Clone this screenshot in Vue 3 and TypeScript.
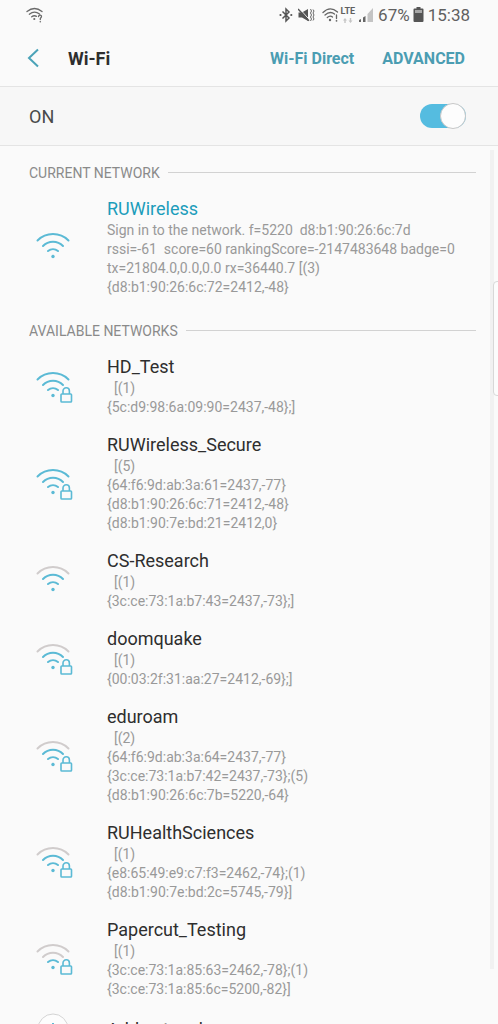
<script setup lang="ts">
import { ref } from 'vue'

interface Network {
  name: string
  bars: number
  locked: boolean
  details: string[]
  current?: boolean
}

interface Section {
  title: string
  networks: Network[]
}

const enabled = ref(true)

const sections: Section[] = [
  {
    title: 'CURRENT NETWORK',
    networks: [
      {
        name: 'RUWireless',
        bars: 3,
        locked: false,
        current: true,
        details: [
          'Sign in to the network. f=5220  d8:b1:90:26:6c:7d',
          'rssi=-61  score=60 rankingScore=-2147483648 badge=0',
          'tx=21804.0,0.0,0.0 rx=36440.7 [(3)',
          '{d8:b1:90:26:6c:72=2412,-48}',
        ],
      },
    ],
  },
  {
    title: 'AVAILABLE NETWORKS',
    networks: [
      { name: 'HD_Test', bars: 3, locked: true, details: ['  [(1)', '{5c:d9:98:6a:09:90=2437,-48};]'] },
      {
        name: 'RUWireless_Secure',
        bars: 3,
        locked: true,
        details: [
          '  [(5)',
          '{64:f6:9d:ab:3a:61=2437,-77}',
          '{d8:b1:90:26:6c:71=2412,-48}',
          '{d8:b1:90:7e:bd:21=2412,0}',
        ],
      },
      { name: 'CS-Research', bars: 2, locked: false, details: ['  [(1)', '{3c:ce:73:1a:b7:43=2437,-73};]'] },
      { name: 'doomquake', bars: 2, locked: true, details: ['  [(1)', '{00:03:2f:31:aa:27=2412,-69};]'] },
      {
        name: 'eduroam',
        bars: 2,
        locked: true,
        details: [
          '  [(2)',
          '{64:f6:9d:ab:3a:64=2437,-77}',
          '{3c:ce:73:1a:b7:42=2437,-73};(5)',
          '{d8:b1:90:26:6c:7b=5220,-64}',
        ],
      },
      {
        name: 'RUHealthSciences',
        bars: 2,
        locked: true,
        details: ['  [(1)', '{e8:65:49:e9:c7:f3=2462,-74};(1)', '{d8:b1:90:7e:bd:2c=5745,-79}]'],
      },
      {
        name: 'Papercut_Testing',
        bars: 1,
        locked: true,
        details: ['  [(1)', '{3c:ce:73:1a:85:63=2462,-78};(1)', '{3c:ce:73:1a:85:6c=5200,-82}]'],
      },
    ],
  },
]
</script>

<template>
  <div class="screen">
    <div class="status">
      <svg class="status-wifi" width="18" height="18" viewBox="0 0 18 18" aria-hidden="true">
        <g fill="none" stroke="#6a6a6a" stroke-width="1.3" stroke-linecap="round">
          <path d="M1 5.500Q8.500-.5 16 5.500" />
          <path d="M3.300 8.200Q8.500 4 13.500 8" />
          <path d="M5.700 10.800Q8 9 10.500 10.300" />
          <path d="M12.500 10.500Q12.800 9 14.300 9.200Q16 9.600 15.300 11.200L14.300 12.500V13.500" />
        </g>
        <circle cx="8.300" cy="13" r="1.100" fill="#6a6a6a" />
        <circle cx="14.300" cy="15.800" r=".8" fill="#6a6a6a" />
      </svg>
      <div class="status-right">
        <svg width="14" height="18" viewBox="0 0 14 18" aria-hidden="true">
          <path d="M3.500 5.500L10 12L7 15V3L10 6L3.500 12.500" fill="none" stroke="#555" stroke-width="1.500" />
          <circle cx="1.500" cy="9" r="1.100" fill="#555" />
          <circle cx="12.300" cy="9" r="1.100" fill="#555" />
        </svg>
        <svg class="mute" width="17" height="18" viewBox="0 0 17 18" aria-hidden="true">
          <path d="M.5 6.500H4L10 3V15L4 11.500H.5Z" fill="#555" />
          <path d="M.8 2L11.300 13.500" stroke="#fafafa" stroke-width="1" />
          <path d="M0 3L11 14.800" stroke="#555" stroke-width="1.400" />
          <path d="M12.500 3l1 2L12.500 7l1 2L12.500 11l1 2L12.500 15M15 3.500l1 1.500L15 7l1 2L15 11l1 2L15 14.500" fill="none" stroke="#666" stroke-width="1" />
        </svg>
        <svg class="wifi-small" width="17" height="18" viewBox="0 0 17 18" aria-hidden="true">
          <g fill="none" stroke="#666" stroke-width="1.300" stroke-linecap="round">
            <path d="M1 6.500Q8-.5 15.500 6" />
            <path d="M3 9Q8 4.500 12.500 8" />
            <path d="M5.300 11.500Q8 9 10.500 11" />
            <path d="M14.500 9V12.500" />
          </g>
          <circle cx="8" cy="14" r="1.200" fill="#666" />
          <circle cx="14.500" cy="14.800" r=".9" fill="#666" />
        </svg>
        <div class="lte">
          <span>LTE</span>
          <svg width="10" height="5" viewBox="0 0 10 5" aria-hidden="true">
            <path d="M0 2.500L2 0L4 2.500H2.700V5H1.300V2.500ZM5.500 2.500H6.800V0H8.200V2.500H9.500L7.500 5Z" fill="#c4c4c4" />
          </svg>
        </div>
        <svg class="signal" width="14" height="16" viewBox="0 0 14 16" aria-hidden="true">
          <path d="M0 13L2 12V15H0ZM4 10.500L6.500 9V15H4Z" fill="#666" />
          <path d="M8.500 7L14 1V15H8.500Z" fill="#c4c4c4" />
        </svg>
        <span class="percent">67%</span>
        <svg class="battery" width="11" height="16" viewBox="0 0 11 16" aria-hidden="true">
          <path d="M3.500 0H7.500V1.500H9.500Q10.500 1.500 10.500 2.500V14Q10.500 15 9.500 15H1.500Q.5 15 .5 14V2.500Q.5 1.500 1.500 1.500H3.500Z" fill="#555" />
          <path d="M2 3H9V6H2Z" fill="#a8a8a8" />
        </svg>
        <time>15:38</time>
      </div>
    </div>

    <header class="bar">
      <button class="back" type="button" aria-label="Navigate up">
        <svg width="14" height="20" viewBox="0 0 14 20" aria-hidden="true">
          <path d="M12 1.500L3 10L12 18.500" fill="none" stroke="#4ba3b8" stroke-width="2" />
        </svg>
      </button>
      <h1>Wi-Fi</h1>
      <button class="action" type="button">Wi-Fi Direct</button>
      <button class="action" type="button">ADVANCED</button>
    </header>

    <label class="power">
      <span>{{ enabled ? 'ON' : 'OFF' }}</span>
      <input v-model="enabled" class="switch" type="checkbox" role="switch" />
    </label>

    <main class="content">
      <section v-for="section in sections" :key="section.title" class="section">
        <h2>{{ section.title }}</h2>
        <button v-for="net in section.networks" :key="net.name" type="button" class="network">
          <svg class="icon" width="40" height="40" viewBox="0 0 40 40" aria-hidden="true">
            <g fill="none" stroke-width="2" stroke-linecap="round">
              <path :class="net.bars > 2 ? 'lit' : 'dim'" d="M3.500 13.500A22 22 0 0 1 34.500 13.500" />
              <path :class="net.bars > 1 ? 'lit' : 'dim'" d="M9 19A14 14 0 0 1 29 19" />
              <path class="lit" d="M14 24A8 8 0 0 1 24 24" />
            </g>
            <circle cx="19" cy="29.500" r="1.700" fill="#5bbad5" />
            <g v-if="net.locked" class="lit" fill="#fafafa" stroke-width="1.600">
              <path d="M29 28V25A3.200 3.200 0 0 1 35.400 25V28" />
              <rect x="27" y="28" width="10.500" height="8" rx=".8" />
            </g>
          </svg>
          <span class="text">
            <span class="name" :class="{ current: net.current }">{{ net.name }}</span>
            <span v-for="line in net.details" :key="line" class="detail">{{ line }}</span>
          </span>
        </button>
      </section>
      <button type="button" class="network add">
        <svg class="icon" width="40" height="40" viewBox="0 0 40 40" aria-hidden="true">
          <circle cx="19" cy="20" r="15" fill="#fdfdfd" stroke="#d4d4d4" />
          <path d="M19 14V26M13 20H25" stroke="#5bbad5" stroke-width="2" />
        </svg>
        <span class="text"><span class="name">Add network</span></span>
      </button>
      <div class="scrollbar"></div>
    </main>
    <div class="edge-handle"></div>
  </div>
</template>

<style>
body {
  margin: 0;
  background: #fafafa;
}
</style>

<style scoped>
.screen {
  position: relative;
  display: flex;
  flex-direction: column;
  height: 100vh;
  overflow: hidden;
  background: #fafafa;
  color: #2e2e2e;
  font-family: Roboto, sans-serif;
}

button {
  margin: 0;
  padding: 0;
  border: 0;
  background: none;
  color: inherit;
  font: inherit;
  text-align: left;
  cursor: pointer;
}

svg {
  display: block;
  flex: none;
}

.status {
  display: flex;
  flex: none;
  align-items: center;
  justify-content: space-between;
  height: 30px;
  padding: 0 28px 0 26px;
  color: #606060;
  font-size: 17px;
}

.status-right {
  display: flex;
  align-items: center;
}

.mute {
  margin-left: 5px;
}

.wifi-small {
  margin-left: 7px;
}

.lte {
  display: flex;
  flex-direction: column;
  align-items: center;
  gap: 2px;
  margin-left: 2px;
  font-size: 9px;
  font-weight: 700;
  line-height: 9px;
}

.signal {
  margin-left: 4px;
}

.percent {
  margin-left: 5px;
}

.battery {
  margin: 0 4px 0 3px;
}

.bar {
  display: flex;
  flex: none;
  align-items: center;
  height: 56px;
  padding: 0 33px 0 26px;
  border-bottom: 1px solid #e4e4e4;
}

.back {
  width: 42px;
}

h1 {
  flex: 1;
  margin: 0;
  font-size: 18px;
  font-weight: 700;
}

.action {
  margin-left: 28px;
  color: #4b9db2;
  font-size: 16px;
  font-weight: 700;
}

.power {
  display: flex;
  flex: none;
  align-items: center;
  justify-content: space-between;
  height: 58px;
  padding: 0 32px 0 29px;
  border-bottom: 1px solid #e4e4e4;
  background: #f7f7f7;
  color: #4a4a4a;
  font-size: 18px;
}

.switch {
  display: flex;
  box-sizing: border-box;
  width: 46px;
  height: 24px;
  margin: 0;
  border-radius: 12px;
  background: #bdbdbd;
  appearance: none;
  align-items: center;
}

.switch:checked {
  justify-content: flex-end;
  background: #55bce0;
}

.switch::before {
  box-sizing: border-box;
  flex: none;
  width: 26px;
  height: 26px;
  border: 1px solid #c8c8c8;
  border-radius: 50%;
  background: #fdfdfd;
  content: "";
}

.content {
  position: relative;
  flex: 1;
  min-height: 0;
  padding-top: 1px;
  overflow: hidden;
}

.section {
  padding-top: 9px;
}

h2 {
  display: flex;
  align-items: center;
  gap: 8px;
  height: 33px;
  margin: 0 22px 0 29px;
  color: #8a8a8a;
  font-size: 14px;
  font-weight: 400;
}

h2::after {
  flex: 1;
  height: 1px;
  background: #d2d2d2;
  content: "";
}

.network {
  display: flex;
  align-items: center;
  gap: 33px;
  width: 100%;
  padding: 7px 24px 8px 34px;
}

.network.add {
  padding-top: 2px;
}

.text {
  display: flex;
  flex: 1;
  flex-direction: column;
  min-width: 0;
}

.name {
  font-size: 18px;
  line-height: 25px;
}

.name.current {
  color: #1c9dbb;
}

.detail {
  color: #999;
  font-size: 14px;
  line-height: 19px;
  white-space: pre-wrap;
}

.lit {
  stroke: #5bbad5;
}

.dim {
  stroke: #d0cccc;
}

.scrollbar {
  position: absolute;
  top: 4px;
  right: 4px;
  width: 4px;
  height: calc(100% - 59px);
  background: #f1f1f1;
}

.edge-handle {
  position: absolute;
  top: 281px;
  right: -5px;
  box-sizing: border-box;
  width: 10px;
  height: 115px;
  border: 1px solid #d8d8d8;
  border-radius: 4px;
  background: #fcfcfc;
}
</style>
